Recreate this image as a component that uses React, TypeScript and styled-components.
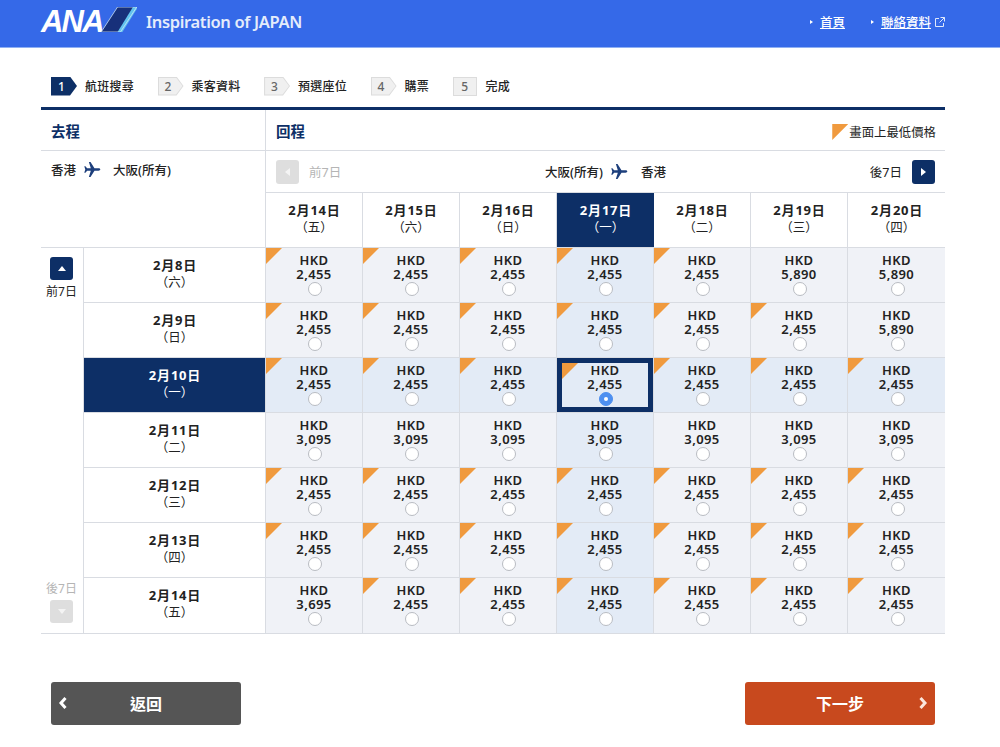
import React from 'react'
import styled, { createGlobalStyle } from 'styled-components'

const GlobalStyle = createGlobalStyle`
  html, body { margin: 0; padding: 0; background: #fff; }
  body {
    font-family: 'Noto Sans', 'Noto Sans CJK TC', sans-serif;
    color: #222;
    -webkit-font-smoothing: antialiased;
  }
`

const NAVY = '#0d2f66'
const LINE = '#d9dce2'

const Page = styled.div`
  width: 1000px;
  height: 747px;
  overflow: hidden;
`

const Header = styled.header`
  box-sizing: border-box;
  height: 48px;
  background: #3569e8;
  border-bottom: 1px solid #8fb0f3;
  display: flex;
  align-items: center;
  justify-content: space-between;
  padding: 0 55px 4px 41px;
`

const Brand = styled.div`
  display: flex;
  align-items: center;
`

const AnaMark = styled.span`
  font: italic 700 31px/1 'Liberation Sans', sans-serif;
  letter-spacing: -1.8px;
  color: #fff;
  width: 60px;
  margin-bottom: 1px;
`

const TailMark = styled.svg`
  margin-bottom: 4px;
`

const Tagline = styled.span`
  margin-left: 9px;
  font-size: 16.5px;
  font-weight: 600;
  color: #e4ecfb;
  letter-spacing: -0.35px;
`

const HeaderLinks = styled.nav`
  display: flex;
  align-items: center;
  gap: 26px;
`

const HeaderLink = styled.a`
  display: flex;
  align-items: center;
  font-size: 12.5px;
  font-weight: 500;
  color: #fff;
  span {
    text-decoration: underline;
  }
  &::before {
    content: '';
    margin-right: 7px;
    border-left: 3px solid #fff;
    border-top: 2.5px solid transparent;
    border-bottom: 2.5px solid transparent;
  }
  svg {
    margin-left: 4px;
  }
`

const Steps = styled.ol`
  list-style: none;
  margin: 0;
  padding: 28px 0 0 51px;
  display: flex;
  gap: 23.5px;
  height: 31px;
`

const Step = styled.li`
  display: flex;
  align-items: center;
  gap: 8px;
  height: 20px;
  font-size: 12px;
  font-weight: 500;
  letter-spacing: 0.25px;
`

const StepBadge = styled.span<{ $active?: boolean; $last?: boolean }>`
  position: relative;
  width: ${({ $last }) => ($last ? '24px' : '26px')};
  margin-right: ${({ $last }) => ($last ? '1px' : '0')};
  height: 19px;
  display: flex;
  align-items: center;
  justify-content: ${({ $last }) => ($last ? 'center' : 'flex-start')};
  box-sizing: border-box;
  padding-left: ${({ $last }) => ($last ? '0' : '7px')};
  font-size: 12px;
  font-weight: 500;
  letter-spacing: 0;
  color: ${({ $active }) => ($active ? '#fff' : '#666')};
  background: ${({ $active }) => ($active ? NAVY : '#dcdcdc')};
  clip-path: ${({ $last }) =>
    $last ? 'none' : 'polygon(0 0, 19px 0, 100% 50%, 19px 100%, 0 100%)'};
  &::before {
    content: '';
    position: absolute;
    inset: 1px;
    z-index: 0;
    background: ${({ $active }) => ($active ? NAVY : '#f0f0f0')};
    clip-path: ${({ $last }) =>
      $last ? 'none' : 'polygon(0 0, 17.5px 0, 100% 50%, 17.5px 100%, 0 100%)'};
  }
  b {
    position: relative;
    font-weight: 500;
  }
`

const Board = styled.section`
  margin: 0 0 0 41px;
  width: 904px;
  border-top: 3px solid ${NAVY};
  box-sizing: content-box;
`

const TopArea = styled.div`
  display: grid;
  grid-template-columns: 225px 679px;
  border-bottom: 1px solid ${LINE};
  height: 137px;
`

const OutboundHead = styled.div`
  border-right: 1px solid ${LINE};
`

const InboundHead = styled.div`
  display: flex;
  flex-direction: column;
  min-width: 0;
`

const TitleRow = styled.div`
  height: 40px;
  border-bottom: 1px solid ${LINE};
  display: flex;
  align-items: center;
  justify-content: space-between;
  padding: 0 9px 0 10px;
`

const LegTitle = styled.h2`
  margin: 0;
  font-size: 14.5px;
  font-weight: 700;
  color: ${NAVY};
`

const Legend = styled.div`
  display: flex;
  align-items: flex-end;
  font-size: 12.4px;
  color: #222;
  margin-top: 4px;
`

const LegendMark = styled.i`
  width: 16px;
  height: 16px;
  background: #f09a3e;
  clip-path: polygon(0 0, 100% 0, 0 100%);
  margin: 0 1px 1px 0;
`

const Route = styled.div`
  display: flex;
  align-items: center;
  font-size: 12.5px;
  font-weight: 500;
  color: #222;
`

const OutboundRoute = styled(Route)`
  padding: 9px 0 0 10px;
  svg {
    margin: 0 12px 0 8px;
  }
`

const InboundRoute = styled(Route)`
  svg {
    margin: 0 13px 0 8px;
  }
`

const NavRow = styled.div`
  height: 41px;
  border-bottom: 1px solid ${LINE};
  display: grid;
  grid-template-columns: 1fr auto 1fr;
  align-items: center;
  padding: 0 10px;
`

const NavSide = styled.div<{ $end?: boolean; $muted?: boolean }>`
  display: flex;
  align-items: center;
  gap: 10px;
  justify-content: ${({ $end }) => ($end ? 'flex-end' : 'flex-start')};
  font-size: 12.5px;
  color: ${({ $muted }) => ($muted ? '#b5b5b5' : '#222')};
`

const PageButton = styled.button<{ $off?: boolean; $dir: 'left' | 'right' | 'up' | 'down' }>`
  width: 23px;
  height: 24px;
  padding: 0;
  border: 0;
  border-radius: 3px;
  background: ${({ $off }) => ($off ? '#dedede' : NAVY)};
  display: flex;
  align-items: center;
  justify-content: center;
  &::after {
    content: '';
    width: 0;
    height: 0;
    ${({ $dir, $off }) => {
      const c = $off ? '#f4f4f4' : '#fff'
      if ($dir === 'left') return `border-right: 5px solid ${c}; border-top: 4px solid transparent; border-bottom: 4px solid transparent;`
      if ($dir === 'right') return `border-left: 5px solid ${c}; border-top: 4px solid transparent; border-bottom: 4px solid transparent;`
      if ($dir === 'up') return `border-bottom: 5px solid ${c}; border-left: 4px solid transparent; border-right: 4px solid transparent;`
      return `border-top: 5px solid ${c}; border-left: 4px solid transparent; border-right: 4px solid transparent;`
    }}
  }
`

const SidePageButton = styled(PageButton)`
  height: 23px;
`

const DayHeads = styled.div`
  flex: 1;
  display: grid;
  grid-template-columns: repeat(7, 97px);
`

const DayHead = styled.div<{ $on?: boolean }>`
  display: flex;
  flex-direction: column;
  align-items: center;
  justify-content: center;
  padding-bottom: 3px;
  box-sizing: border-box;
  border-right: ${({ $on }) => ($on ? '0' : `1px solid ${LINE}`)};
  background: ${({ $on }) => ($on ? NAVY : '#fff')};
  color: ${({ $on }) => ($on ? '#fff' : '#222')};
  &:last-child {
    border-right: 0;
  }
`

const DayDate = styled.strong`
  font-size: 13px;
  line-height: 17px;
  font-weight: 700;
  letter-spacing: 0.8px;
  margin-right: -1px;
`

const DayWeek = styled.span`
  font-size: 12.5px;
  line-height: 17px;
`

const Body = styled.div`
  display: flex;
  border-bottom: 1px solid ${LINE};
`

const Side = styled.div`
  width: 43px;
  flex: none;
  box-sizing: border-box;
  border-right: 1px solid ${LINE};
  display: flex;
  flex-direction: column;
  justify-content: space-between;
  align-items: center;
  padding: 9px 0 10px;
  font-size: 12px;
  line-height: 16px;
`

const SideGroup = styled.div<{ $muted?: boolean }>`
  display: flex;
  flex-direction: column;
  align-items: center;
  gap: ${({ $muted }) => ($muted ? '3px' : '4px')};
  color: ${({ $muted }) => ($muted ? '#b5b5b5' : '#222')};
  margin-left: -1px;
`

const Fares = styled.div`
  display: grid;
  grid-template-columns: 182px repeat(7, 97px);
  grid-auto-rows: 55px;
`

const RowHead = styled.div<{ $on?: boolean; $last?: boolean }>`
  display: flex;
  flex-direction: column;
  align-items: center;
  justify-content: center;
  box-sizing: border-box;
  padding-bottom: 3px;
  border-right: 1px solid ${LINE};
  border-bottom: ${({ $last }) => ($last ? '0' : `1px solid ${LINE}`)};
  background: ${({ $on }) => ($on ? NAVY : '#fff')};
  color: ${({ $on }) => ($on ? '#fff' : '#222')};
`

const FareCell = styled.label<{ $tint?: boolean; $last?: boolean; $lastCol?: boolean }>`
  position: relative;
  display: flex;
  flex-direction: column;
  align-items: center;
  box-sizing: border-box;
  padding-top: 5px;
  background: ${({ $tint }) => ($tint ? '#e3ebf6' : '#f0f2f7')};
  border-right: ${({ $lastCol }) => ($lastCol ? '0' : `1px solid ${LINE}`)};
  border-bottom: ${({ $last }) => ($last ? '0' : `1px solid ${LINE}`)};
  font-size: 13px;
  line-height: 14px;
  font-weight: 600;
  letter-spacing: 0.4px;
  color: #222;
`

const SelectedFrame = styled.span`
  position: absolute;
  inset: 0 0 0 0;
  border: 5px solid ${NAVY};
  pointer-events: none;
`

const Cheapest = styled.i<{ $selected?: boolean }>`
  position: absolute;
  top: ${({ $selected }) => ($selected ? '5px' : '0')};
  left: ${({ $selected }) => ($selected ? '5px' : '0')};
  width: 16px;
  height: 16px;
  background: #f09a3e;
  clip-path: polygon(0 0, 100% 0, 0 100%);
`

const Radio = styled.span<{ $checked?: boolean }>`
  position: relative;
  margin: 1px 0 0 2px;
  width: 14px;
  height: 14px;
  box-sizing: border-box;
  border-radius: 50%;
  background: ${({ $checked }) => ($checked ? '#4d8ff0' : '#fff')};
  border: 1px solid ${({ $checked }) => ($checked ? '#4d8ff0' : '#b9bcc2')};
  display: flex;
  align-items: center;
  justify-content: center;
  &::after {
    content: '';
    display: ${({ $checked }) => ($checked ? 'block' : 'none')};
    width: 4px;
    height: 4px;
    border-radius: 50%;
    background: #fff;
  }
`

const Actions = styled.div`
  display: flex;
  justify-content: space-between;
  padding: 48px 65px 0 51px;
`

const ActionButton = styled.button<{ $next?: boolean }>`
  position: relative;
  width: 190px;
  height: 43px;
  border: 0;
  border-radius: 3px;
  background: ${({ $next }) => ($next ? '#c8491e' : '#555555')};
  color: #fff;
  font-family: inherit;
  font-size: 16px;
  font-weight: 700;
  padding: 0 0 2px;
  svg {
    position: absolute;
    top: 14px;
    ${({ $next }) => ($next ? 'right: 7px;' : 'left: 7px;')}
  }
`

const Plane = () => (
  <svg width="17" height="17" viewBox="0 0 24 24" fill="#1d3f7c">
    <path d="M23 12c0-1-1.2-1.7-2.4-1.7h-5.8L9.2 1.5H6.9l2.7 8.8H4.4L2 7.3H.4L1.800 12 .4 16.700H2l2.400-3h5.200l-2.700 8.800h2.300l5.600-8.800h5.800C21.800 13.700 23 13 23 12z" />
  </svg>
)

const weekdays: Record<number, string> = { 8: '六', 9: '日', 10: '一', 11: '二', 12: '三', 13: '四', 14: '五', 15: '六', 16: '日', 17: '一', 18: '二', 19: '三', 20: '四' }
const returnDays = [14, 15, 16, 17, 18, 19, 20]
const selectedDepart = 10
const selectedReturn = 17

type Fare = { price: string; low: boolean }
const low = (n: number): Fare[] => Array.from({ length: n }, () => ({ price: '2,455', low: true }))
const high = (price: string): Fare => ({ price, low: false })

const rows: { day: number; fares: Fare[] }[] = [
  { day: 8, fares: [...low(5), high('5,890'), high('5,890')] },
  { day: 9, fares: [...low(6), high('5,890')] },
  { day: 10, fares: low(7) },
  { day: 11, fares: Array.from({ length: 7 }, () => high('3,095')) },
  { day: 12, fares: low(7) },
  { day: 13, fares: low(7) },
  { day: 14, fares: [high('3,695'), ...low(6)] },
]

const steps = ['航班搜尋', '乘客資料', '預選座位', '購票', '完成']

export default function App() {
  return (
    <Page>
      <GlobalStyle />
      <Header>
        <Brand>
          <AnaMark>ANA</AnaMark>
          <TailMark width="36" height="25" viewBox="0 0 37 26">
            <polygon points="0,26 17,0 37,0 20,26" fill="#17307a" />
            <polygon points="22,26 37,2 37,0 33,0 17,26" fill="#62c3ee" />
            <polygon points="0,26 17,0 37,0 20,26" fill="none" stroke="#cfe6f8" strokeWidth="0.8" />
          </TailMark>
          <Tagline>Inspiration of JAPAN</Tagline>
        </Brand>
        <HeaderLinks>
          <HeaderLink><span>首頁</span></HeaderLink>
          <HeaderLink>
            <span>聯絡資料</span>
            <svg width="10" height="10" viewBox="0 0 10 10" fill="none" stroke="#dfe8fb" strokeWidth="1">
              <path d="M4 1.500H.5v8h8V6M5.500.500h4v4M9.500.500 4.500 5.500" />
            </svg>
          </HeaderLink>
        </HeaderLinks>
      </Header>

      <Steps>
        {steps.map((label, i) => (
          <Step key={label}>
            <StepBadge $active={i === 0} $last={i === steps.length - 1}>
              <b>{i + 1}</b>
            </StepBadge>
            {label}
          </Step>
        ))}
      </Steps>

      <Board>
        <TopArea>
          <OutboundHead>
            <TitleRow>
              <LegTitle>去程</LegTitle>
            </TitleRow>
            <OutboundRoute>
              香港
              <Plane />
              大阪(所有)
            </OutboundRoute>
          </OutboundHead>
          <InboundHead>
            <TitleRow>
              <LegTitle>回程</LegTitle>
              <Legend>
                <LegendMark />
                畫面上最低價格
              </Legend>
            </TitleRow>
            <NavRow>
              <NavSide $muted>
                <PageButton $off $dir="left" />
                前7日
              </NavSide>
              <InboundRoute>
                大阪(所有)
                <Plane />
                香港
              </InboundRoute>
              <NavSide $end>
                後7日
                <PageButton $dir="right" />
              </NavSide>
            </NavRow>
            <DayHeads>
              {returnDays.map(d => (
                <DayHead key={d} $on={d === selectedReturn}>
                  <DayDate>2月{d}日</DayDate>
                  <DayWeek>（{weekdays[d]}）</DayWeek>
                </DayHead>
              ))}
            </DayHeads>
          </InboundHead>
        </TopArea>

        <Body>
          <Side>
            <SideGroup>
              <SidePageButton $dir="up" />
              前7日
            </SideGroup>
            <SideGroup $muted>
              後7日
              <SidePageButton $off $dir="down" />
            </SideGroup>
          </Side>
          <Fares>
            {rows.map((row, r) => {
              const lastRow = r === rows.length - 1
              return (
                <React.Fragment key={row.day}>
                  <RowHead $on={row.day === selectedDepart} $last={lastRow}>
                    <DayDate>2月{row.day}日</DayDate>
                    <DayWeek>（{weekdays[row.day]}）</DayWeek>
                  </RowHead>
                  {row.fares.map((fare, c) => {
                    const retDay = returnDays[c]
                    const selected = row.day === selectedDepart && retDay === selectedReturn
                    return (
                      <FareCell
                        key={retDay}
                        $tint={row.day === selectedDepart || retDay === selectedReturn}
                        $last={lastRow}
                        $lastCol={c === 6}
                      >
                        HKD
                        <span>{fare.price}</span>
                        <Radio $checked={selected} />
                        {selected && <SelectedFrame />}
                        {fare.low && <Cheapest $selected={selected} />}
                      </FareCell>
                    )
                  })}
                </React.Fragment>
              )
            })}
          </Fares>
        </Body>
      </Board>

      <Actions>
        <ActionButton>
          <svg width="10" height="14" viewBox="0 0 10 14" fill="none" stroke="#fff" strokeWidth="3">
            <path d="M7.500 2 3 7l4.500 5" />
          </svg>
          返回
        </ActionButton>
        <ActionButton $next>
          下一步
          <svg width="10" height="14" viewBox="0 0 10 14" fill="none" stroke="#fbe6dc" strokeWidth="3">
            <path d="M2.500 2 7 7l-4.500 5" />
          </svg>
        </ActionButton>
      </Actions>
    </Page>
  )
}
